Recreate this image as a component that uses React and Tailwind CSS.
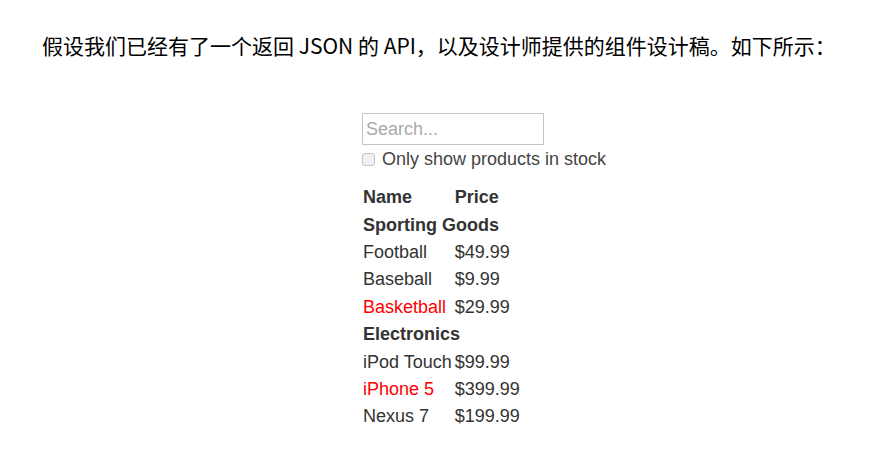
import React from "react";

const products = [
  { category: "Sporting Goods" },
  { name: "Football", price: "$49.99", stocked: true },
  { name: "Baseball", price: "$9.99", stocked: true },
  { name: "Basketball", price: "$29.99", stocked: false },
  { category: "Electronics" },
  { name: "iPod Touch", price: "$99.99", stocked: true },
  { name: "iPhone 5", price: "$399.99", stocked: false },
  { name: "Nexus 7", price: "$199.99", stocked: true },
];

const App = () => {
  return (
    <div className="bg-white w-[889px] h-[458px] overflow-hidden">
      {/* Intro paragraph */}
      <p
        className="pl-[42px] pt-[32px] text-[21px] leading-[26px] text-black"
        style={{ fontFamily: '"Noto Sans CJK SC", "Noto Sans", sans-serif' }}
      >
        假设我们已经有了一个返回 JSON 的 API，以及设计师提供的组件设计稿。如下所示：
      </p>

      {/* Mockup */}
      <div
        className="ml-[362px] mt-[55px] text-[18px] text-[#333]"
        style={{ fontFamily: '"Liberation Sans", Arial, sans-serif' }}
      >
        <div className="w-[182px] h-[32px] border border-[#c4c4c4] flex items-center px-[3px] text-[#aaa]">
          Search...
        </div>
        <div className="flex items-center mt-[6px] h-[16px]">
          <span className="w-[13px] h-[13px] rounded-[3px] border border-[#c6c6c6] bg-[#f1f1f1]" />
          <span className="ml-[7px] text-[#444]">Only show products in stock</span>
        </div>

        <div className="mt-[17px] ml-[1px] grid grid-cols-[max-content_max-content] gap-x-[3px] auto-rows-[27.4px] items-center">
          <div className="font-bold">Name</div>
          <div className="font-bold">Price</div>
          {products.map((p, i) =>
            p.category ? (
              <div key={i} className="col-span-2 font-bold">
                {p.category}
              </div>
            ) : (
              <React.Fragment key={i}>
                <div className={p.stocked ? "" : "text-[#ff0000]"}>{p.name}</div>
                <div>{p.price}</div>
              </React.Fragment>
            )
          )}
        </div>
      </div>
    </div>
  );
};

export default App;
